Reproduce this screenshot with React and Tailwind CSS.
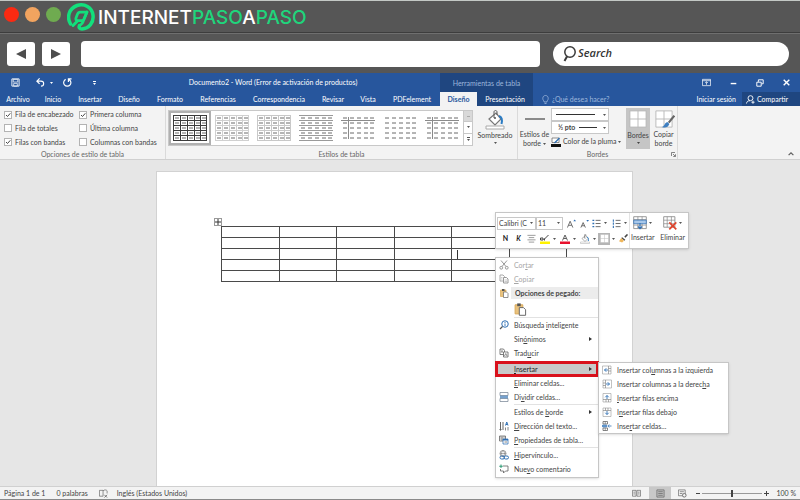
import clsx from "clsx";

const tabs = [
  "Archivo",
  "Inicio",
  "Insertar",
  "Diseño",
  "Formato",
  "Referencias",
  "Correspondencia",
  "Revisar",
  "Vista",
  "PDFelement",
];

const styleOptions = [
  { label: "Fila de encabezado", checked: true },
  { label: "Primera columna", checked: true },
  { label: "Fila de totales", checked: false },
  { label: "Última columna", checked: false },
  { label: "Filas con bandas", checked: true },
  { label: "Columnas con bandas", checked: false },
];

// h = horizontal rules, v = vertical rules, top/first = header row and first column
const tableStyles = [
  { name: "Tabla con cuadrícula", color: "#3c3c3c", h: true, v: true },
  { name: "Cuadrícula clara", color: "#d0d0d0", h: true, v: true },
  { name: "Tabla normal 1", color: "#c8c8c8", h: true, v: true },
  { name: "Tabla normal 2", color: "#9a9a9a", h: true },
  { name: "Tabla normal 3", color: "#8a8a8a", top: true, first: true },
  { name: "Tabla normal 4", color: "#8a8a8a" },
  { name: "Tabla normal 5", color: "#8a8a8a", top: true, first: true },
];

const insertItems = [
  { before: "Insertar col", key: "u", after: "mnas a la izquierda", icon: "colLeft" },
  { before: "Insertar columnas a la derec", key: "h", after: "a", icon: "colRight" },
  { before: "", key: "I", after: "nsertar filas encima", icon: "rowUp" },
  { before: "I", key: "n", after: "sertar filas debajo", icon: "rowDown" },
  { before: "Inse", key: "r", after: "tar celdas...", icon: "cells" },
];

/* ---------- icons ---------- */

function Icon({ className = "size-[10px]", children, box = "0 0 20 20" }) {
  return (
    <svg
      viewBox={box}
      className={clsx("shrink-0", className)}
      fill="none"
      stroke="#5f5f5f"
      strokeWidth="2"
      aria-hidden="true"
    >
      {children}
    </svg>
  );
}

function Caret({ className = "text-[#555]" }) {
  return (
    <svg viewBox="0 0 6 4" className={clsx("h-[2px] w-[3px] shrink-0", className)} aria-hidden="true">
      <path d="M0 0h6L3 4z" fill="currentColor" />
    </svg>
  );
}

function Logo() {
  return (
    <svg viewBox="0 0 56 56" className="size-[28px] shrink-0" fill="none" aria-hidden="true">
      <g stroke="#12e07c" strokeLinecap="round" strokeLinejoin="round">
        <path d="M7 42C-1 28 4 11 20 5c15-5 30 4 32 19 2 15-8 27-22 28-5 0-7-3-5-7" strokeWidth="7" />
        <path d="M12 45l9-9" strokeWidth="6" />
        <path d="M40 18H27c-3 0-5 1-6 4l-3 8c-1 3 0 5 3 5h8c3 0 4-1 5-3z" strokeWidth="5.500" />
        <path d="M40 18l-7 17c-1 4-4 8-8 10" strokeWidth="5.500" />
      </g>
    </svg>
  );
}

function PasteIcon({ className }) {
  return (
    <Icon className={className}>
      <path d="M3 4h11v13H3z" fill="#e9c27e" stroke="#d9a958" strokeWidth="1.4" />
      <path d="M6 2h5v4H6z" fill="#555" stroke="none" />
      <path d="M9 8h6l3 3v8H9z" fill="#fff" stroke="#666" strokeWidth="1.4" />
    </Icon>
  );
}

function BucketIcon({ className }) {
  return (
    <Icon className={className}>
      <path d="M4 9l7-6 5 6-6 6z" fill="#fff" stroke="#777" strokeWidth="1.2" />
      <path d="M9 8V2c0-2 3-2 3 0v3" strokeWidth="1" />
      <circle cx="10" cy="8" r="1" fill="#555" stroke="none" />
      <path d="M14 6c3 1 3.500 4 2.500 8" stroke="#2b7cc4" strokeWidth="2" />
      <path d="M1 16h18v3H1z" fill="#fff" stroke="#aaa" strokeWidth="1" />
    </Icon>
  );
}

function GridIcon({ className }) {
  return (
    <Icon className={className}>
      <path d="M1 1h18v18H1z" fill="#fff" stroke="#b5b5b5" strokeWidth="1" />
      <path d="M10 1v18M1 10h18" stroke="#b5b5b5" strokeWidth="1" />
    </Icon>
  );
}

function MenuIcon({ name }) {
  switch (name) {
    case "cut":
      return (
        <Icon>
          <path d="M4 1l10 12M16 1L6 13" stroke="#999" />
          <circle cx="4.500" cy="15.500" r="2.800" stroke="#999" />
          <circle cx="15.500" cy="15.500" r="2.800" stroke="#999" />
        </Icon>
      );
    case "copy":
      return (
        <Icon>
          <path d="M2 2h6l3 3v9H2z" stroke="#aaa" />
          <path d="M9 7h6l3 3v8H9z" fill="#fff" stroke="#999" />
          <path d="M11 12h5M11 15h5M4 7h3M4 10h3" stroke="#aaa" strokeWidth="1.200" />
        </Icon>
      );
    case "paste":
      return <PasteIcon className="size-[10px]" />;
    case "search":
      return (
        <Icon>
          <circle cx="12" cy="8" r="6.500" stroke="#2f6fb3" />
          <path d="M7 13l-5 5" stroke="#555" strokeWidth="2.500" />
          <path d="M12 7v5M12 4v2" stroke="#2f6fb3" strokeWidth="1.800" />
        </Icon>
      );
    case "translate":
      return (
        <Icon>
          <path d="M2 2h7l2 3v8H2z" strokeWidth="1.600" />
          <path d="M9 8h9v10H9z" fill="#fff" strokeWidth="1.600" />
          <path d="M11 16l2.500-5 2.500 5M4 6h4M6 6v4" strokeWidth="1.400" />
        </Icon>
      );
    case "split":
      return (
        <Icon>
          <path d="M2 1h16v6H2zM2 13h16v6H2z" fill="#fff" stroke="#7a8797" strokeWidth="1.500" />
          <path d="M2 8.500h16M2 11.500h16" stroke="#4a82bd" strokeWidth="2" />
        </Icon>
      );
    case "direction":
      return (
        <Icon>
          <path d="M3 2v16M8 2v16" stroke="#666" />
          <path d="M13 9l2.500-7L18 9M14 7h3" stroke="#2f6fb3" />
          <path d="M13 13v6M18 12v7M1 16l2 3 2-3" strokeWidth="1.500" />
        </Icon>
      );
    case "properties":
      return (
        <Icon>
          <path d="M1 2h12v10H1z" fill="#fff" strokeWidth="1.500" />
          <path d="M1 4h12M1 8h12M6 4v8" strokeWidth="1.200" />
          <path d="M8 8h10v10H8z" fill="#fff" stroke="#2f6fb3" strokeWidth="1.500" />
          <path d="M8 9.500h10" stroke="#2f6fb3" strokeWidth="3" />
          <path d="M11 14h5" strokeWidth="1.500" />
        </Icon>
      );
    case "link":
      return (
        <Icon>
          <circle cx="8" cy="7" r="6" stroke="#777" strokeWidth="1.500" />
          <path d="M2 7h12M8 1c-4 4-4 8 0 12 4-4 4-8 0-12" stroke="#777" strokeWidth="1.200" />
          <rect x="2" y="12" width="9" height="6" rx="3" stroke="#2f6fb3" />
          <rect x="10" y="12" width="9" height="6" rx="3" stroke="#2f6fb3" />
        </Icon>
      );
    case "comment":
      return (
        <Icon>
          <path d="M8 4h10v10h-5l-4 4v-4H3v-4" strokeWidth="1.600" />
          <path d="M4 1v7M0.500 4.500h7" stroke="#2e9a74" />
        </Icon>
      );
    default:
      return <span className="size-[10px] shrink-0" />;
  }
}

function InsertIcon({ name }) {
  if (name === "cells") {
    return (
      <Icon>
        <path d="M2 1h9v5H2zM2 14h9v5H2z" fill="#fff" strokeWidth="1.500" />
        <path d="M6.500 1v5M6.500 14v5" strokeWidth="1.200" />
        <path d="M1 8h8v4H1z" fill="#6fa3d8" stroke="#2f6fb3" strokeWidth="1.200" />
        <path d="M19 10h-7M14.500 7l-3 3 3 3" stroke="#2f6fb3" strokeWidth="1.600" />
      </Icon>
    );
  }
  const turn = {
    colLeft: "",
    colRight: "rotate(180 10 10)",
    rowUp: "rotate(90 10 10)",
    rowDown: "rotate(270 10 10)",
  }[name];
  return (
    <Icon>
      <g transform={turn}>
        <path d="M1 2h17v16H1z" fill="#fff" stroke="#999" strokeWidth="1.200" />
        <path d="M13 2v16M13 7h5M13 12h5" stroke="#777" strokeWidth="1.200" />
        <path d="M12 10H5M8.500 6.500L5 10l3.500 3.500" stroke="#2f6fb3" strokeWidth="1.800" />
      </g>
    </Icon>
  );
}

function StyleThumb({ color, h, v, top, first }) {
  const xs = [1, 8, 15, 22, 28];
  const ys = [2, 7, 12, 17, 22];
  return (
    <svg viewBox="0 0 34 26" className="h-[26px] w-[34px]" fill="none" stroke={color} aria-hidden="true">
      {ys.map((y) => xs.map((x) => <path key={`${x}-${y}`} d={`M${x + 1} ${y + 1}h4`} stroke="#6a6a6a" />))}
      {h && [0.5, 5.5, 10.5, 15.5, 20.5, 25.5].map((y) => <path key={y} d={`M0 ${y}h34`} />)}
      {v && [0.5, 7.5, 14.5, 21.5, 27.5, 33.5].map((x) => <path key={x} d={`M${x} 0v26`} />)}
      {top && <path d="M0 5.500h34" />}
      {first && <path d="M7.500 2v22" />}
    </svg>
  );
}

/* ---------- browser frame ---------- */

function BrowserBar() {
  return (
    <header className="border-t border-[#c3c8c5] bg-[#565656]">
      <div className="flex h-[32px] items-center rounded-t border-b border-[#3d3d3d] px-1">
        <div className="-mt-1 flex gap-[6px]">
          <span className="size-[15px] rounded-full bg-[#fb2a12]" />
          <span className="size-[15px] rounded-full bg-[#f2a45f]" />
          <span className="size-[15px] rounded-full bg-[#6fab50]" />
        </div>
        <div className="ml-[6px] flex items-center gap-[3px]">
          <Logo />
          <span className="pt-[2px] font-['Inter'] text-[19px] leading-[28px] font-medium text-white">
            INTERNET<span className="text-[#1fd57c]">PASO</span>A
            <span className="text-[#1fd57c]">PASO</span>
          </span>
        </div>
      </div>
      <div className="flex h-[40px] items-center border-t border-[#6f6f6f] pr-[11px] pl-[7px]">
        <button aria-label="Atrás" className="grid h-6 w-7 place-items-center rounded-[3px] bg-white">
          <svg viewBox="0 0 10 10" className="size-[10px]" fill="#4d4d4d" aria-hidden="true">
            <path d="M10 0v10L0 5z" />
          </svg>
        </button>
        <button aria-label="Adelante" className="ml-[7px] grid h-6 w-7 place-items-center rounded-[3px] bg-white">
          <svg viewBox="0 0 10 10" className="size-[10px]" fill="#4d4d4d" aria-hidden="true">
            <path d="M0 0v10l10-5z" />
          </svg>
        </button>
        <input
          type="text"
          aria-label="Dirección"
          className="ml-[11px] h-[26px] min-w-0 flex-1 rounded bg-white px-2 text-xs outline-none"
        />
        <label className="ml-[13px] flex h-6 w-[236px] items-center rounded-full bg-white pl-[10px]">
          <svg viewBox="0 0 14 16" className="h-4 w-[14px] shrink-0" fill="none" stroke="#3a3a3a" strokeWidth="1.500" aria-hidden="true">
            <circle cx="7" cy="6" r="5.200" />
            <path d="M4 10.500L1.500 15" strokeWidth="2" />
          </svg>
          <input
            type="text"
            aria-label="Search"
            defaultValue="Search"
            className="ml-px min-w-0 flex-1 bg-transparent font-['Open_Sans'] text-[11px] font-semibold text-[#333] italic outline-none"
          />
        </label>
      </div>
    </header>
  );
}

/* ---------- word: title bar and ribbon ---------- */

function TitleBar() {
  return (
    <div className="flex h-[33px] bg-[#27569d] text-white">
      <div className="flex w-[440px] shrink-0 flex-col">
        <div className="flex h-[19px] items-center pl-[11px]">
          <button aria-label="Guardar">
            <Icon className="size-[9px]">
              <path d="M2 2h16v16H2z" stroke="#fff" />
              <path d="M5 3h10v6H5zM6 12h8v6H6z" stroke="#fff" strokeWidth="1.600" />
            </Icon>
          </button>
          <button aria-label="Deshacer" className="ml-4 flex items-center gap-[5px]">
            <Icon className="size-[9px]">
              <path d="M8 1L2 7l6 6M2 7h9c8 0 8 11 0 11" stroke="#fff" strokeWidth="2.600" />
            </Icon>
            <Caret className="text-white" />
          </button>
          <button aria-label="Rehacer" className="ml-[10px]">
            <Icon className="size-[9px]">
              <path d="M13 3a8 8 0 1 1-7 0M12 9V2h7" stroke="#fff" strokeWidth="2.600" />
            </Icon>
          </button>
          <button aria-label="Personalizar" className="ml-[21px] grid gap-px">
            <span className="h-px w-[3px] bg-white" />
            <Caret className="text-white" />
          </button>
          <h1 className="flex-1 pl-[10px] text-center">Documento2 - Word (Error de activación de productos)</h1>
        </div>
        <nav className="grid h-[14px] grid-cols-[36px_34px_40px_38px_44px_52px_70px_38px_32px_56px]">
          {tabs.map((tab) => (
            <button key={tab} className="whitespace-nowrap">
              {tab}
            </button>
          ))}
        </nav>
      </div>
      <div className="flex w-[93px] shrink-0 flex-col bg-[#1f4680]">
        <p className="h-[19px] pt-[6px] text-center text-[#9db6dc]">Herramientas de tabla</p>
        <div className="flex h-[14px]">
          <button className="w-[37px] bg-[#f3f3f3] font-bold text-[#27569d]">Diseño</button>
          <button className="flex-1">Presentación</button>
        </div>
      </div>
      <div className="flex min-w-0 flex-1 flex-col">
        <div className="flex h-[19px] items-center justify-end gap-[19px] pr-[10px]">
          <button aria-label="Opciones de la cinta">
            <Icon className="size-[9px]">
              <path d="M1 3h18v14H1zM1 6h18" stroke="#fff" strokeWidth="1.600" />
              <path d="M10 15V9M7 11l3-3 3 3" stroke="#fff" strokeWidth="1.600" />
            </Icon>
          </button>
          <button aria-label="Minimizar">
            <Icon className="size-[7px]">
              <path d="M2 13h16" stroke="#fff" strokeWidth="4" />
            </Icon>
          </button>
          <button aria-label="Restaurar">
            <Icon className="size-[8px]">
              <path d="M2 8h11v10H2zM6 7V2h12v10h-4" stroke="#fff" strokeWidth="2.400" />
            </Icon>
          </button>
          <button aria-label="Cerrar">
            <Icon className="size-[7px]">
              <path d="M2 2l16 16M18 2L2 18" stroke="#fff" strokeWidth="4" />
            </Icon>
          </button>
        </div>
        <div className="flex h-[14px] items-center pl-[9px]">
          <Icon className="h-[9px] w-[7px]" box="0 0 14 18">
            <path d="M4 12C0 9 1 1 7 1s7 8 3 11v2H4zM5 17h4" stroke="#9db6dc" strokeWidth="1.600" />
          </Icon>
          <button className="ml-[3px] text-[#9db6dc]">¿Qué desea hacer?</button>
          <button className="mr-[6px] ml-auto">Iniciar sesión</button>
          <button className="flex h-[14px] w-[58px] items-center gap-[2px] bg-[#1f4680] pl-1">
            <Icon className="size-[9px]">
              <circle cx="10" cy="7" r="5.500" stroke="#fff" />
              <path d="M1 19c1-5 4-7 8-6M12 16h7M15.500 12.500v7" stroke="#fff" />
            </Icon>
            Compartir
          </button>
        </div>
      </div>
    </div>
  );
}

function Group({ label, className, children }) {
  return (
    <section className={clsx("flex shrink-0 flex-col border-r border-[#dadada]", className)}>
      <div className="flex h-[44px]">{children}</div>
      <p className="text-center text-[#666]">{label}</p>
    </section>
  );
}

function CheckOption({ label, checked }) {
  return (
    <label className="flex items-center gap-[3px] whitespace-nowrap">
      <span className="relative size-[8px]">
        <input
          type="checkbox"
          defaultChecked={checked}
          className="peer block size-[8px] appearance-none border border-[#b3b3b3] bg-white"
        />
        <svg
          viewBox="0 0 8 8"
          className="pointer-events-none absolute inset-0 hidden size-[8px] peer-checked:block"
          fill="none"
          stroke="#444"
          aria-hidden="true"
        >
          <path d="M2 4l1.500 1.500L6.300 2.300" />
        </svg>
      </span>
      {label}
    </label>
  );
}

function Ribbon() {
  return (
    <div className="flex h-[54px] border-b border-[#d0d0d0] bg-[#f3f3f3] text-[#444]">
      <Group label="Opciones de estilo de tabla" className="w-[166px]">
        <div className="grid h-[43px] flex-1 grid-cols-[75px_1fr] items-center pt-[2px] pl-1">
          {styleOptions.map((option) => (
            <CheckOption key={option.label} {...option} />
          ))}
        </div>
      </Group>

      <Group label="Estilos de tabla" className="w-[352px]">
        <div className="mt-1 ml-[2px] flex h-[36px] border border-[#c8c8c8] bg-white">
          {tableStyles.map((style, i) => (
            <button
              key={style.name}
              aria-label={style.name}
              className={clsx(
                "grid w-[42px] place-items-center",
                i === 0 && "border-2 border-[#b0b0b0]",
              )}
            >
              <StyleThumb {...style} />
            </button>
          ))}
          <div className="grid w-[9px] grid-rows-3 divide-y divide-[#c8c8c8] border-l border-[#c8c8c8]">
            <button aria-label="Anterior" className="grid place-items-center bg-[#d9d9d9]">
              <span className="h-px w-[3px] bg-[#aaa]" />
            </button>
            <button aria-label="Siguiente" className="grid place-items-center">
              <Caret />
            </button>
            <button aria-label="Más" className="grid place-content-center gap-px">
              <span className="h-px w-[3px] bg-[#555]" />
              <Caret />
            </button>
          </div>
        </div>
        <button className="flex flex-1 flex-col items-center pt-1">
          <BucketIcon className="size-[20px]" />
          <span className="pt-px">Sombreado</span>
          <Caret className="mt-[2px] text-[#555]" />
        </button>
      </Group>

      <Group label="Bordes" className="w-[160px]">
        <button className="flex w-[33px] flex-col items-center">
          <span className="mt-3 mb-[10px] h-[2px] w-5 bg-[#8a8a8a]" />
          Estilos de
          <span className="flex items-center gap-[2px]">
            borde <Caret />
          </span>
        </button>
        <div className="flex w-[75px] flex-col pt-[2px]">
          <div className="relative w-[58px]">
            <select
              aria-label="Estilo de línea"
              className="block h-[13px] w-full appearance-none border border-[#c8c8c8] bg-white"
            />
            <span className="pointer-events-none absolute inset-0 flex items-center justify-between pr-[3px] pl-[5px]">
              <span className="h-px w-[39px] bg-[#333]" />
              <Caret />
            </span>
          </div>
          <div className="relative w-[58px]">
            <select
              aria-label="Grosor de línea"
              className="block h-[13px] w-full appearance-none border border-[#c8c8c8] bg-white pl-[6px] font-bold"
            >
              <option>½ pto</option>
            </select>
            <span className="pointer-events-none absolute inset-0 flex items-center justify-end gap-[6px] pr-[3px]">
              <span className="h-px w-[18px] bg-[#333]" />
              <Caret />
            </span>
          </div>
          <button className="flex h-[15px] items-center gap-[2px] whitespace-nowrap">
            <Icon className="h-[10px] w-[10px]">
              <path d="M2 2h14v9H2z" fill="#fff" strokeWidth="1.400" />
              <path d="M7 12L17 2" stroke="#2f6fb3" strokeWidth="2.600" />
              <path d="M0 14h20v6H0z" fill="#111" stroke="none" />
            </Icon>
            Color de la pluma
            <Caret />
          </button>
        </div>
        <button className="flex h-[41px] w-6 flex-col items-center self-center bg-[#c5c5c5] pt-[2px]">
          <GridIcon className="size-[18px]" />
          <span className="pt-[3px]">Bordes</span>
          <Caret className="mt-[2px] text-[#444]" />
        </button>
        <button className="flex flex-1 flex-col items-center pt-1">
          <span className="relative">
            <GridIcon className="size-[18px]" />
            <Icon className="absolute top-[5px] left-[6px] size-[14px]">
              <path d="M19 1L11 11" stroke="#666" strokeWidth="3" />
              <path d="M1 17c4 0 4-6 8-7l3 3c-2 5-6 6-11 4z" fill="#3f7fc0" stroke="none" />
            </Icon>
          </span>
          <span className="pt-[2px] leading-[9px]">
            Copiar
            <br />
            borde
          </span>
        </button>
      </Group>

      <div className="-ml-[7px] flex flex-1 items-end justify-between pr-[6px] pb-[2px]">
        <button aria-label="Configuración de bordes">
          <Icon className="size-[5px]">
            <path d="M2 16V2h14M8 8l9 9M18 9v9H9" strokeWidth="3" />
          </Icon>
        </button>
        <button aria-label="Contraer la cinta">
          <Icon className="size-[6px]">
            <path d="M2 14l8-8 8 8" strokeWidth="4" />
          </Icon>
        </button>
      </div>
    </div>
  );
}

/* ---------- floating toolbar and menus ---------- */

function MiniToolbar() {
  return (
    <div className="absolute top-[40px] left-[338px] flex h-[37px] w-[194px] border border-[#c6c6c6] bg-white text-[#444] shadow-sm">
      <div className="flex w-[134px] shrink-0 flex-col border-r border-[#e4e4e4] pl-px">
        <div className="flex h-[18px] items-center pt-[2px]">
          <div className="relative">
            <select
              aria-label="Fuente"
              className="block h-[13px] w-[39px] appearance-none border border-[#c8c8c8] bg-white pl-px"
            >
              <option>Calibri (C</option>
            </select>
            <Caret className="pointer-events-none absolute top-[5px] right-[3px] text-[#555]" />
          </div>
          <div className="relative">
            <select
              aria-label="Tamaño de fuente"
              className="block h-[13px] w-[27px] appearance-none border border-[#c8c8c8] bg-white pl-px"
            >
              <option>11</option>
            </select>
            <Caret className="pointer-events-none absolute top-[5px] right-[3px] text-[#555]" />
          </div>
          <button aria-label="Agrandar fuente" className="ml-1">
            <Icon className="size-[9px]">
              <path d="M1 19L7 5l6 14M3.500 14h7" />
              <path d="M14 5l3-4 3 4z" fill="#2f6fb3" stroke="none" />
            </Icon>
          </button>
          <button aria-label="Reducir fuente" className="ml-1">
            <Icon className="size-[9px]">
              <path d="M2 19L7 8l5 11M4 15h6" />
              <path d="M14 2h6l-3 4z" fill="#2f6fb3" stroke="none" />
            </Icon>
          </button>
          <button aria-label="Viñetas" className="ml-[3px] flex items-center gap-[3px]">
            <Icon className="size-[9px]">
              <path d="M1 3h4M1 10h4M1 17h4" stroke="#2f6fb3" strokeWidth="3" />
              <path d="M8 3h11M8 10h11M8 17h11" />
            </Icon>
            <Caret />
          </button>
          <button aria-label="Numeración" className="ml-[5px] flex items-center gap-[3px]">
            <Icon className="size-[9px]">
              <path d="M3 1v5M3 8v5M3 15v5" stroke="#2f6fb3" strokeWidth="2.400" />
              <path d="M8 3h11M8 10h11M8 17h11" />
            </Icon>
            <Caret />
          </button>
        </div>
        <div className="flex h-[15px] items-center pl-1">
          <button className="w-[9px] font-bold text-[#222]">N</button>
          <button className="ml-1 w-[9px] font-bold text-[#222] italic">K</button>
          <button aria-label="Centrar" className="ml-1">
            <Icon className="size-[9px]">
              <path d="M1 3h18M4 8h12M1 13h18M4 18h12" stroke="#777" strokeWidth="1.600" />
            </Icon>
          </button>
          <button aria-label="Resaltado" className="ml-1 flex items-center gap-[3px]">
            <Icon className="size-[10px]">
              <path d="M1 8h5v4H1zM7 12L17 2M9 9v4" stroke="#444" />
              <path d="M0 15h20v5H0z" fill="#fff200" stroke="none" />
            </Icon>
            <Caret />
          </button>
          <button aria-label="Color de fuente" className="ml-1 flex items-center gap-[3px]">
            <Icon className="size-[10px]">
              <path d="M5 13l5-11 5 11M7 9h6" />
              <path d="M0 15h20v5H0z" fill="#e8112d" stroke="none" />
            </Icon>
            <Caret />
          </button>
          <button aria-label="Sombreado" className="ml-1 flex items-center gap-[3px]">
            <BucketIcon className="size-[10px]" />
            <Caret />
          </button>
          <button aria-label="Bordes" className="ml-[2px] flex items-center gap-[2px]">
            <span className="grid size-[12px] place-items-center bg-[#b5b5b5]">
              <GridIcon className="size-[9px]" />
            </span>
            <Caret />
          </button>
          <button aria-label="Copiar formato" className="ml-1">
            <Icon className="size-[9px]">
              <path d="M19 1l-6 6" stroke="#444" strokeWidth="3.500" />
              <path d="M7 7l7 6-2 2-7-6z" fill="#444" stroke="none" />
              <path d="M5 9l6 6-4 4-7-3z" fill="#efb65a" stroke="none" />
            </Icon>
          </button>
        </div>
      </div>
      <div className="flex flex-1 justify-between pt-[3px] pr-[3px] pl-px">
        <button className="flex flex-col items-center">
          <span className="flex items-center gap-[2px]">
            <Icon className="size-[14px]">
              <path d="M1 1h18v17H1z" fill="#fff" stroke="#888" strokeWidth="1.200" />
              <path d="M1 5h18M1 13h18M7 1v17M13 1v17" stroke="#888" strokeWidth="1" />
              <path d="M1 6h18v5H1z" fill="#a9c8ea" stroke="#2f6fb3" strokeWidth="1" />
              <path d="M10 10v8M7 15l3 3 3-3" stroke="#2f6fb3" strokeWidth="1.600" />
            </Icon>
            <Caret />
          </span>
          <span className="pt-[3px]">Insertar</span>
        </button>
        <button className="flex flex-col items-center">
          <span className="flex items-center gap-[2px]">
            <Icon className="size-[14px]">
              <path d="M1 1h16v15H1z" fill="#fff" stroke="#888" strokeWidth="1.200" />
              <path d="M1 6h16M1 11h16M6 1v15M12 1v15" stroke="#888" strokeWidth="1" />
              <path d="M9 9l10 10M19 9L9 19" stroke="#e0442c" strokeWidth="2.400" />
            </Icon>
            <Caret />
          </span>
          <span className="pt-[3px]">Eliminar</span>
        </button>
      </div>
    </div>
  );
}

function MenuItem({ before = "", k, after = "", icon, disabled, arrow }) {
  return (
    <button disabled={disabled} className="flex h-[14px] w-full items-center pr-[6px] pl-[3px] text-left disabled:text-[#a6a6a6]">
      <MenuIcon name={icon} />
      <span className="ml-[5px] flex-1 whitespace-nowrap">
        {before}
        <span className="underline">{k}</span>
        {after}
      </span>
      {arrow && <ArrowRight />}
    </button>
  );
}

function ArrowRight() {
  return (
    <svg viewBox="0 0 3 4" className="h-[4px] w-[3px] shrink-0" fill="#333" aria-hidden="true">
      <path d="M0 0v4l3-2z" />
    </svg>
  );
}

function Separator() {
  return <hr className="ml-[18px] border-[#e2e2e2]" />;
}

function ContextMenu() {
  return (
    <div className="absolute top-[85px] left-[338px] w-[104px] border border-[#c6c6c6] bg-white pb-px text-[#444] shadow-sm">
      <MenuItem before="Cor" k="t" after="ar" icon="cut" disabled />
      <MenuItem k="C" after="opiar" icon="copy" disabled />
      <div className="flex h-[14px] items-center pl-[3px]">
        <MenuIcon name="paste" />
        <span className="ml-[2px] flex-1 bg-[#ececec] pl-[4px] leading-[12px] font-bold">Opciones de pegado:</span>
      </div>
      <button aria-label="Mantener formato de origen" className="ml-[17px] block h-[17px]">
        <PasteIcon className="size-[14px]" />
      </button>
      <Separator />
      <MenuItem before="Búsqueda " k="i" after="nteligente" icon="search" />
      <MenuItem before="Sin" k="ó" after="nimos" arrow />
      <MenuItem before="Trad" k="u" after="cir" icon="translate" />
      <div className="h-[2px]" />
      <div className="relative bg-[#c9c9c9] text-[#222] outline-3 -outline-offset-2 outline-[#d9111c]">
        <MenuItem k="I" after="nsertar" arrow />
        <div className="absolute top-0 left-full w-[131px] border border-[#c6c6c6] bg-white text-[#444] shadow-sm">
          {insertItems.map((item) => (
            <button key={item.icon} className="flex h-[14px] w-full items-center pl-[3px] whitespace-nowrap">
              <InsertIcon name={item.icon} />
              <span className="ml-[5px]">
                {item.before}
                <span className="underline">{item.key}</span>
                {item.after}
              </span>
            </button>
          ))}
        </div>
      </div>
      <MenuItem k="E" after="liminar celdas..." />
      <MenuItem before="Di" k="v" after="idir celdas..." icon="split" />
      <Separator />
      <MenuItem before="Estilos de " k="b" after="orde" arrow />
      <MenuItem k="D" after="irección del texto..." icon="direction" />
      <MenuItem k="P" after="ropiedades de tabla..." icon="properties" />
      <Separator />
      <MenuItem k="H" after="ipervínculo..." icon="link" />
      <MenuItem before="Nue" k="v" after="o comentario" icon="comment" />
    </div>
  );
}

function Page() {
  return (
    <div className="relative mx-auto w-[477px] border-x border-t border-[#d2d2d2] bg-white pt-[46px] pl-[57px]">
      <button aria-label="Mover tabla" className="grid size-[8px] place-items-center border border-[#999]">
        <svg viewBox="0 0 6 6" className="size-[6px]" stroke="#333" aria-hidden="true">
          <path d="M3 0v6M0 3h6" />
        </svg>
      </button>
      <table className="ml-[7px] w-[346px] table-fixed border-collapse">
        <tbody>
          {[0, 1, 2, 3, 4].map((row) => (
            <tr key={row} className="h-[11px]">
              {[0, 1, 2, 3, 4, 5].map((col) => (
                <td key={col} className="border border-[#4a4a4a] p-0">
                  {row === 2 && col === 4 && <span className="ml-[5px] block h-[9px] w-px bg-[#333]" />}
                </td>
              ))}
            </tr>
          ))}
        </tbody>
      </table>
      <MiniToolbar />
      <ContextMenu />
    </div>
  );
}

function StatusBar() {
  return (
    <footer className="flex h-[14px] items-center border-t border-b border-t-[#d0d0d0] border-b-[#8a8a8a] bg-[#f3f3f3] px-1 text-[#444]">
      <span>Página 1 de 1</span>
      <span className="ml-[11px]">0 palabras</span>
      <button aria-label="Revisión" className="ml-[11px]">
        <Icon className="size-[9px]">
          <path d="M1 3h8v13H1zM9 4c3-3 8-2 9 0v6" strokeWidth="1.500" />
          <path d="M12 13l6 6M18 13l-6 6" strokeWidth="1.800" />
        </Icon>
      </button>
      <span className="ml-[9px]">Inglés (Estados Unidos)</span>
      <button aria-label="Modo de lectura" className="mr-2 ml-auto">
        <Icon className="size-[9px]">
          <path d="M1 3h8v13H1zM11 3h8v13h-8zM3 7h4M3 11h4M13 7h4M13 11h4" strokeWidth="1.500" />
        </Icon>
      </button>
      <button aria-label="Diseño de impresión" className="grid h-3 w-[22px] place-items-center bg-[#c8c8c8]">
        <Icon className="size-[9px]">
          <path d="M2 2h16v16H2z" fill="#bbb" strokeWidth="1.500" />
          <path d="M5 6h10M5 10h10M5 14h10" strokeWidth="1.500" />
        </Icon>
      </button>
      <button aria-label="Diseño web" className="ml-[7px]">
        <Icon className="size-[9px]">
          <path d="M1 2h15v13H1zM4 6h9M4 10h6" strokeWidth="1.500" />
          <circle cx="14" cy="14" r="4" fill="#f3f3f3" strokeWidth="1.800" />
        </Icon>
      </button>
      <button aria-label="Alejar" className="ml-[9px] h-px w-[4px] bg-[#444]" />
      <input
        type="range"
        aria-label="Zoom"
        defaultValue="50"
        className="mx-[2px] h-[10px] w-[60px] appearance-none bg-transparent [&::-webkit-slider-runnable-track]:h-px [&::-webkit-slider-runnable-track]:bg-[#999] [&::-webkit-slider-thumb]:mt-[-3px] [&::-webkit-slider-thumb]:h-[7px] [&::-webkit-slider-thumb]:w-[2px] [&::-webkit-slider-thumb]:appearance-none [&::-webkit-slider-thumb]:bg-[#444]"
      />
      <button aria-label="Acercar">
        <Icon className="size-[5px]">
          <path d="M10 0v20M0 10h20" stroke="#444" strokeWidth="4" />
        </Icon>
      </button>
      <span className="ml-[7px]">100 %</span>
    </footer>
  );
}

export default function App() {
  return (
    <div className="flex min-h-screen flex-col bg-[#565656]">
      <BrowserBar />
      <main className="flex flex-1 flex-col font-['Lato',sans-serif] text-[7px] leading-[9px]">
        <TitleBar />
        <Ribbon />
        <div className="flex flex-1 overflow-hidden bg-[#e6e6e6] pt-[11px] pr-[11px]">
          <Page />
        </div>
        <StatusBar />
      </main>
    </div>
  );
}
